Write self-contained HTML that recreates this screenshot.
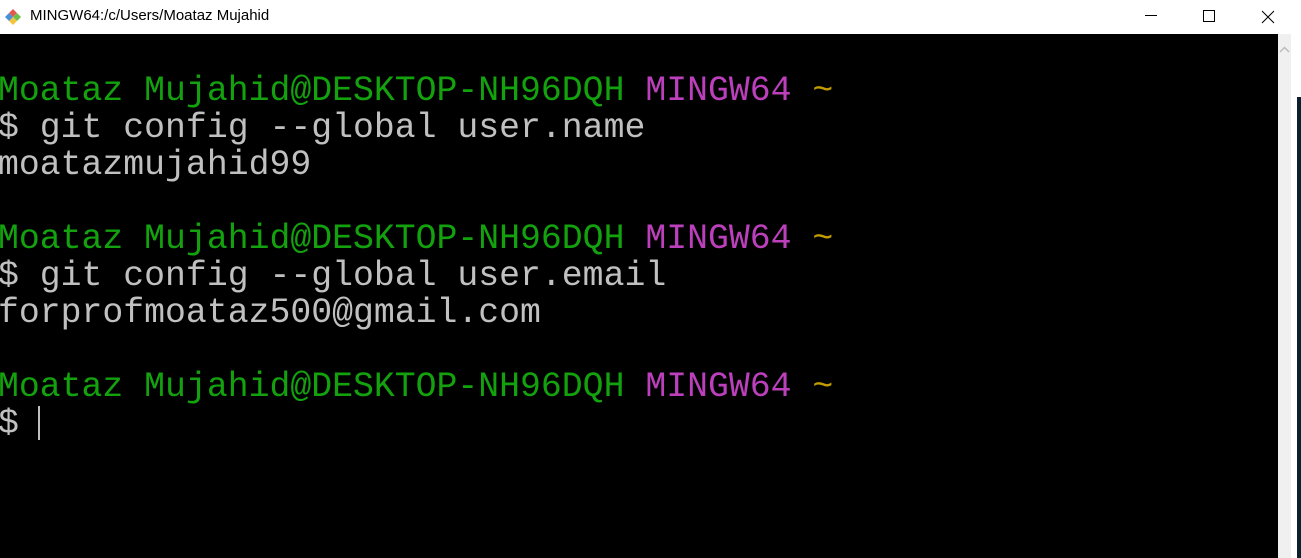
<!DOCTYPE html>
<html><head><style>
body{margin:0;width:1301px;height:558px;overflow:hidden;background:#fff;position:relative;font-family:"Liberation Sans",sans-serif}
.title{position:absolute;left:0;top:0;width:1301px;height:34px;background:#fff}
.title span{position:absolute;left:30px;top:7px;font-size:15px;color:#000}
.term{position:absolute;left:0;top:34px;width:1278px;height:524px;background:#000;overflow:hidden}
.sb{position:absolute;left:1278px;top:34px;width:13px;height:524px;background:#f0f0f0}
.edge{position:absolute;left:1297px;top:97px;width:4px;height:461px;background:#0a2030}
pre{margin:0;position:absolute;left:-2px;top:39px;font-family:"Liberation Mono",monospace;font-size:34.8px;line-height:37px;color:#c0c0c0}
.g{color:#13a10e}.m{color:#bc3fbc}.y{color:#c19c00}
.cur{position:absolute;left:38px;top:372px;width:2px;height:34px;background:#c0c0c0}
</style></head><body>
<div class="title">
<svg style="position:absolute;left:4px;top:8px" width="18" height="18" viewBox="0 0 18 18">
<polygon points="9,1 13,5 9,9 5,5" fill="#e05a4f"/><polygon points="13,5 17,9 13,13 9,9" fill="#6cbf4a"/>
<polygon points="9,9 13,13 9,17 5,13" fill="#f2c53d"/><polygon points="5,5 9,9 5,13 1,9" fill="#4a90d9"/></svg>
<span>MINGW64:/c/Users/Moataz Mujahid</span>
<svg style="position:absolute;left:1140px;top:8px" width="150" height="18" viewBox="0 0 150 18">
<line x1="5" y1="7.5" x2="17" y2="7.5" stroke="#000"/>
<rect x="63.5" y="2.5" width="11" height="11" fill="none" stroke="#000"/>
<path d="M122 3 L134 15 M134 3 L122 15" stroke="#000"/></svg>
</div>
<div class="term">
<pre><span class="g">Moataz Mujahid@DESKTOP-NH96DQH</span> <span class="m">MINGW64</span> <span class="y">~</span>
$ git config --global user.name
moatazmujahid99

<span class="g">Moataz Mujahid@DESKTOP-NH96DQH</span> <span class="m">MINGW64</span> <span class="y">~</span>
$ git config --global user.email
forprofmoataz500@gmail.com

<span class="g">Moataz Mujahid@DESKTOP-NH96DQH</span> <span class="m">MINGW64</span> <span class="y">~</span>
$</pre>
<div class="cur"></div>
</div>
<div class="sb"><svg width="13" height="20" style="position:absolute;top:6px"><path d="M2 12 L6.5 7.5 L11 12" stroke="#bbb" fill="none" stroke-width="1.5"/></svg></div>
<div class="edge"></div>
</body></html>
